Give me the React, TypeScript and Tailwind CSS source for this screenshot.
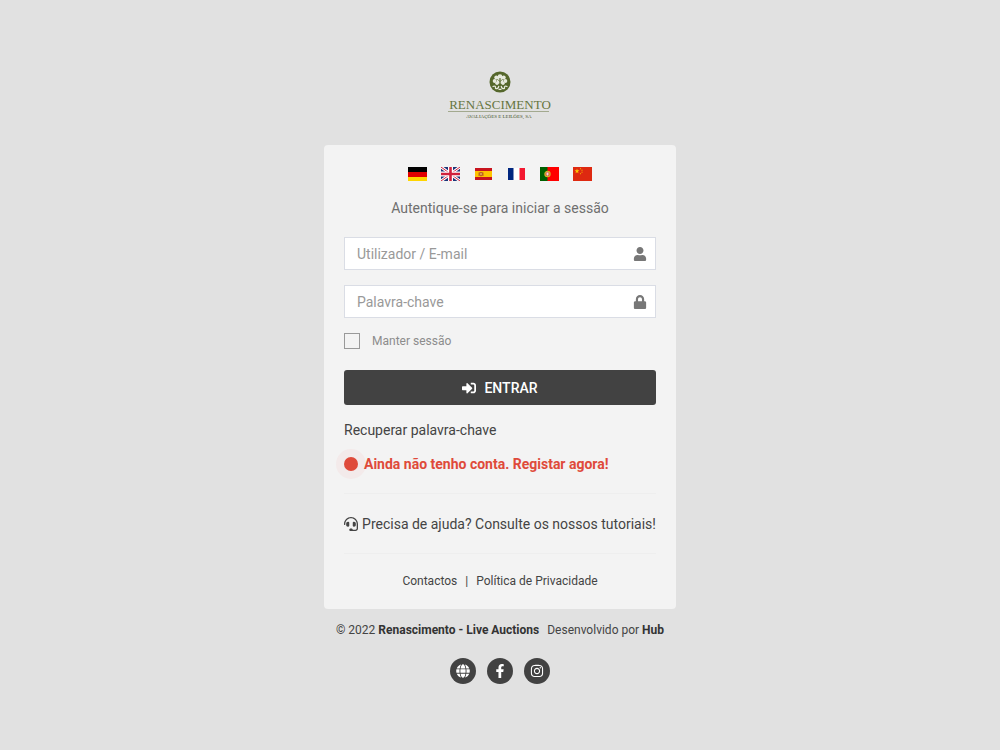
import type { ReactNode } from "react";
import {
  FaFacebookF,
  FaGlobe,
  FaHeadset,
  FaInstagram,
  FaLock,
  FaSignInAlt,
  FaUser,
} from "react-icons/fa";

interface Language {
  label: string;
  flag: ReactNode;
}

const languages: Language[] = [
  {
    label: "Deutsch",
    flag: (
      <>
        <path fill="#000" d="M0 0h19v5H0z" />
        <path fill="#e00000" d="M0 5h19v5H0z" />
        <path fill="#ffd500" d="M0 10h19v4H0z" />
      </>
    ),
  },
  {
    label: "English",
    flag: (
      <>
        <path fill="#1c3578" d="M0 0h19v14H0z" />
        <path stroke="#fff" strokeWidth="3" d="M0 0l19 14M19 0L0 14" />
        <path stroke="#d0203c" strokeWidth="1" d="M0 0l19 14M19 0L0 14" />
        <path stroke="#fff" strokeWidth="5" d="M9.5 0v14M0 7h19" />
        <path stroke="#d0203c" strokeWidth="2.6" d="M9.5 0v14M0 7h19" />
      </>
    ),
  },
  {
    label: "Español",
    flag: (
      <>
        <path fill="#c8141e" d="M1 1h17v12H1z" />
        <path fill="#ffc400" d="M1 4h17v6H1z" />
        <path fill="#c0651d" d="M4.500 5.500h1v3.500h-1zM8.500 5.500h1v3.500h-1zM5.500 5h3v3.500l-1.500 1-1.500-1z" />
        <path fill="#dd9a50" d="M6 6h2v2H6z" />
      </>
    ),
  },
  {
    label: "Français",
    flag: (
      <>
        <path fill="#fff" d="M1 1h17v12H1z" />
        <path fill="#00267f" d="M1 1h5.500v12H1z" />
        <path fill="#f31830" d="M12.500 1H18v12h-5.500z" />
      </>
    ),
  },
  {
    label: "Português",
    flag: (
      <>
        <path fill="#f00" d="M0 0h19v14H0z" />
        <path fill="#006000" d="M0 0h7.500v14H0z" />
        <circle cx="7.500" cy="7" r="2.600" fill="#d84030" stroke="#d3b52a" strokeWidth="1.200" />
        <path fill="#f4dede" d="M6.500 5.500h2v2.500l-1 .8-1-.8z" />
      </>
    ),
  },
  {
    label: "中文",
    flag: (
      <>
        <path fill="#de2910" d="M0 0h19v14H0z" />
        <path
          fill="#ffc800"
          d="M4 1.600l.6 1.700h1.800L5 4.400l.5 1.800L4 5.200l-1.500 1 .5-1.800-1.400-1.100h1.800z"
        />
        <circle cx="7.500" cy="1.700" r=".6" fill="#f5a800" />
        <circle cx="9" cy="3.200" r=".6" fill="#f5a800" />
        <circle cx="9" cy="5.200" r=".6" fill="#f5a800" />
        <circle cx="7.500" cy="6.700" r=".6" fill="#f5a800" />
      </>
    ),
  },
];

const socials = [
  { label: "Website", icon: <FaGlobe size={14} /> },
  { label: "Facebook", icon: <FaFacebookF size={14} /> },
  { label: "Instagram", icon: <FaInstagram size={14} /> },
];

function Logo() {
  return (
    <svg viewBox="0 0 106 50" className="h-[50px] w-[106px]" role="img" aria-label="Renascimento">
      <circle cx="53" cy="11" r="10.500" fill="#55672b" />
      {/* leaf */}
      <g fill="#e6e9dc">
        <circle cx="53" cy="5.500" r="2.300" />
        <circle cx="49.300" cy="6.500" r="2" />
        <circle cx="56.700" cy="6.500" r="2" />
        <circle cx="47.700" cy="10" r="2" />
        <circle cx="58.300" cy="10" r="2" />
        <circle cx="50" cy="12.300" r="1.700" />
        <circle cx="56" cy="12.300" r="1.700" />
        <path d="M50 6h6v6.500h-6z" />
      </g>
      {/* stem and scrolls */}
      <g fill="none" strokeLinecap="round">
        <path stroke="#55672b" strokeWidth="1.200" d="M53 7.500v8" />
        <path stroke="#55672b" strokeWidth=".7" d="M50.500 8.500l2.500 2 2.500-2" />
        <path
          stroke="#e6e9dc"
          strokeWidth="1.300"
          d="M46 15.500c1.500-1 3 0 2.500 1.500M60 15.500c-1.500-1-3 0-2.500 1.500M48.500 17.500c1.500.6 2.800-.2 3.200-2M57.500 17.500c-1.500.6-2.800-.2-3.200-2M52 18.300h2"
        />
      </g>
      <text
        x="53"
        y="38"
        textAnchor="middle"
        fontFamily="'Liberation Serif', serif"
        fontSize="13"
        fill="#66753f"
      >
        RENASCIMENTO
      </text>
      <path stroke="#a3a98f" strokeWidth="1" d="M1 40.500h101" />
      <text
        x="52"
        y="47"
        textAnchor="middle"
        fontFamily="'Liberation Serif', serif"
        fontSize="5"
        fill="#45532a"
      >
        AVALIAÇÕES E LEILÕES, SA
      </text>
    </svg>
  );
}

function Field({
  id,
  type,
  label,
  icon,
}: {
  id: string;
  type: string;
  label: string;
  icon: ReactNode;
}) {
  return (
    <div className="flex h-[33px] items-center border border-[#dadde5] bg-white pr-2 pl-3">
      <input
        id={id}
        type={type}
        placeholder={label}
        aria-label={label}
        className="min-w-0 flex-1 bg-transparent text-sm leading-5 outline-none placeholder:text-[#999]"
      />
      <label htmlFor={id} className="text-[#777]">
        {icon}
      </label>
    </div>
  );
}

export default function App() {
  return (
    <div className="flex min-h-screen flex-col items-center bg-[#e1e1e1] px-4 pt-[71px] pb-16 font-['Roboto',sans-serif] text-sm leading-5 text-[#444]">
      <Logo />

      <main className="mt-6 w-full max-w-[352px] rounded bg-[#f3f3f3] px-5 pt-[22px] pb-[18px]">
        <div className="flex justify-center gap-[14px]">
          {languages.map((lang) => (
            <button key={lang.label} type="button" aria-label={lang.label} className="block">
              <svg viewBox="0 0 19 14" className="h-[14px] w-[19px]">
                {lang.flag}
              </svg>
            </button>
          ))}
        </div>

        <p className="mt-[17px] text-center text-[#6f6f6f]">Autentique-se para iniciar a sessão</p>

        <form className="mt-[19px]" onSubmit={(e) => e.preventDefault()}>
          <div className="space-y-[15px]">
            <Field id="user" type="text" label="Utilizador / E-mail" icon={<FaUser size={14} />} />
            <Field id="password" type="password" label="Palavra-chave" icon={<FaLock size={14} />} />
          </div>

          <div className="mt-[15px] flex h-4 items-center">
            <input
              id="remember"
              type="checkbox"
              className="size-4 appearance-none border border-[#999] checked:bg-[#999]"
            />
            <label htmlFor="remember" className="pl-3 text-xs leading-4 text-[#8c8c8c]">
              Manter sessão
            </label>
          </div>

          <button
            type="submit"
            className="mt-[21px] flex h-[35px] w-full items-center justify-center gap-2 rounded-[3px] bg-[#424242] font-medium text-white"
          >
            <FaSignInAlt size={14} />
            ENTRAR
          </button>
        </form>

        <a href="#recuperar" className="mt-[15px] block">
          Recuperar palavra-chave
        </a>
        <a
          href="#registar"
          className="mt-[14px] flex items-center gap-[6px] font-bold text-[#df4a3a]"
        >
          <span className="size-[14px] rounded-full bg-[#df4a3a] ring-8 ring-[#f3eaea]" />
          <span className="relative">Ainda não tenho conta. Registar agora!</span>
        </a>

        <hr className="mt-[19px] border-[#eee]" />
        <a
          href="#tutoriais"
          className="mt-5 mb-[19px] flex items-center justify-center gap-1 whitespace-nowrap"
        >
          <FaHeadset size={14} className="shrink-0" />
          Precisa de ajuda? Consulte os nossos tutoriais!
        </a>
        <hr className="border-[#eee]" />

        <nav className="mt-[17px] flex justify-center gap-2 text-xs leading-5">
          <a href="#contactos">Contactos</a>
          <span>|</span>
          <a href="#privacidade">Política de Privacidade</a>
        </nav>
      </main>

      <footer className="mt-[11px] flex flex-col items-center text-xs leading-5">
        <div className="flex gap-2">
          <p>
            © 2022 <b className="text-[#333]">Renascimento - Live Auctions</b>
          </p>
          <p>
            Desenvolvido por <b className="text-[#333]">Hub</b>
          </p>
        </div>
        <div className="mt-[18px] flex gap-[11px]">
          {socials.map((s) => (
            <a
              key={s.label}
              href="#social"
              aria-label={s.label}
              className="flex size-[26px] items-center justify-center rounded-full bg-[#424242] text-white"
            >
              {s.icon}
            </a>
          ))}
        </div>
      </footer>
    </div>
  );
}
